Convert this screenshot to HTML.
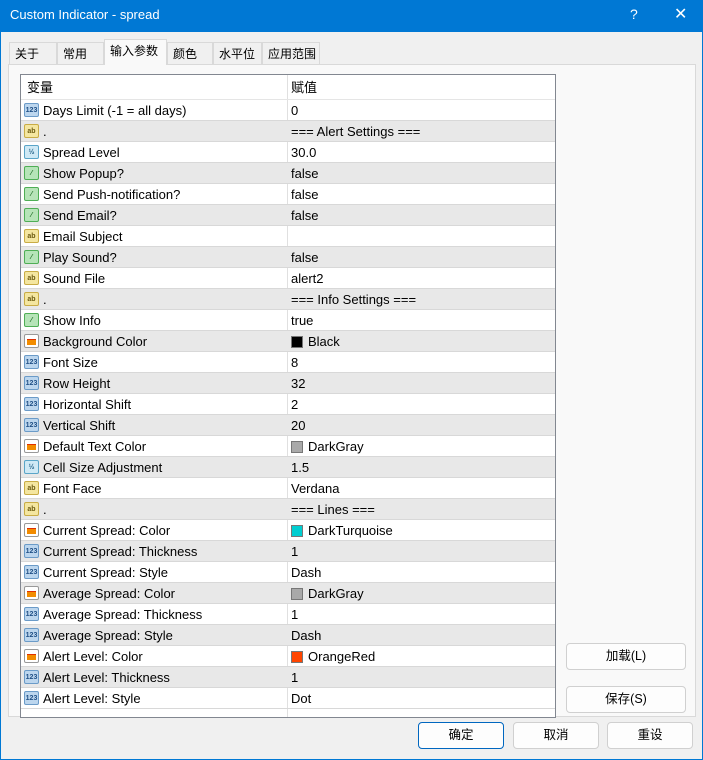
<!DOCTYPE html>
<html><head><meta charset="utf-8"><style>
*{box-sizing:border-box;margin:0;padding:0}
body{width:703px;height:760px;overflow:hidden;background:#0078d4;font-family:"Liberation Sans","Noto Sans CJK SC",sans-serif;font-size:13px;color:#000;position:relative}
.win{position:absolute;left:1px;top:32px;width:701px;height:727px;background:#f0f0f0}
.title{position:absolute;left:10px;top:7px;color:#fff;font-size:13px}
.tb{position:absolute;color:#fff;font-size:14px;top:6px}
.tab{position:absolute;top:42px;height:22px;line-height:22px;padding:0 5px;font-size:12px;border:1px solid #d9d9d9;border-bottom:none;background:#f0f0f0;white-space:nowrap;overflow:hidden}
.tab.act{top:39px;height:26px;background:#f9f9f9;z-index:2}
.panel{position:absolute;left:8px;top:64px;width:688px;height:653px;background:#f9f9f9;border:1px solid #d9d9d9}
.tbl{position:absolute;left:20px;top:74px;width:536px;height:644px;background:#fff;border:1px solid #828790;overflow:hidden}
.hdr{position:absolute;left:0;top:0;width:534px;height:25px;line-height:26px;border-bottom:1px solid #e5e5e5}
.row{position:absolute;left:0;width:534px;height:21px;line-height:22px;border-bottom:1px solid #d8d8d8;white-space:nowrap}
.row.g{background:#e8e8e8}
.n{position:absolute;left:22px}
.v{position:absolute;left:270px}
.div{position:absolute;left:266px;top:0;width:1px;height:100%;background:#e0e0e0}
.ic{position:absolute;left:3px;top:3px;width:15px;height:14px;border-radius:2px;font-size:7px;line-height:13px;text-align:center;font-weight:bold}
.i1{background:#bcd6ee;border:1px solid #6b9bc8;color:#1f4f86}
.i2{background:#f4e6a0;border:1px solid #c9ac45;color:#6b5a10}
.i3{background:#b6e4b8;border:1px solid #4fae55;color:#1d6a22}
.i4{background:#fff;border:1px solid #999}
.i4:after{content:"";position:absolute;left:2px;top:4px;width:9px;height:5px;background:#f28c00;border-top:1px solid #e03000}
.i5{background:#cfe9f5;border:1px solid #5aa5c8;color:#1f5f86}
.sw{display:inline-block;width:12px;height:12px;vertical-align:-2px;margin-right:5px;border:1px solid #777}
.btn{position:absolute;height:27px;background:#fdfdfd;border:1px solid #d0d0d0;border-radius:4px;text-align:center;line-height:25px;font-size:12.5px}
</style></head><body>
<div class="title">Custom Indicator - spread</div>
<div class="tb" style="left:630px">?</div><div class="tb" style="left:674px;font-size:16px;top:4px">✕</div>
<div class="win"></div>
<div class="tab" style="left:9px;width:48px">关于</div>
<div class="tab" style="left:57px;width:47px">常用</div>
<div class="tab act" style="left:104px;width:63px">输入参数</div>
<div class="tab" style="left:167px;width:46px">颜色</div>
<div class="tab" style="left:213px;width:49px">水平位</div>
<div class="tab" style="left:262px;width:58px">应用范围</div>
<div class="panel"></div>
<div class="tbl">
<div class="div"></div>
<div class="hdr"><span style="position:absolute;left:6px">变量</span><span style="position:absolute;left:270px">赋值</span></div>
<div class="row" style="top:25px"><span class="ic i1">123</span><span class="n">Days Limit (-1 = all days)</span><span class="v">0</span></div>
<div class="row g" style="top:46px"><span class="ic i2">ab</span><span class="n">.</span><span class="v">=== Alert Settings ===</span></div>
<div class="row" style="top:67px"><span class="ic i5">½</span><span class="n">Spread Level</span><span class="v">30.0</span></div>
<div class="row g" style="top:88px"><span class="ic i3">⁄</span><span class="n">Show Popup?</span><span class="v">false</span></div>
<div class="row" style="top:109px"><span class="ic i3">⁄</span><span class="n">Send Push-notification?</span><span class="v">false</span></div>
<div class="row g" style="top:130px"><span class="ic i3">⁄</span><span class="n">Send Email?</span><span class="v">false</span></div>
<div class="row" style="top:151px"><span class="ic i2">ab</span><span class="n">Email Subject</span><span class="v"></span></div>
<div class="row g" style="top:172px"><span class="ic i3">⁄</span><span class="n">Play Sound?</span><span class="v">false</span></div>
<div class="row" style="top:193px"><span class="ic i2">ab</span><span class="n">Sound File</span><span class="v">alert2</span></div>
<div class="row g" style="top:214px"><span class="ic i2">ab</span><span class="n">.</span><span class="v">=== Info Settings ===</span></div>
<div class="row" style="top:235px"><span class="ic i3">⁄</span><span class="n">Show Info</span><span class="v">true</span></div>
<div class="row g" style="top:256px"><span class="ic i4"></span><span class="n">Background Color</span><span class="v"><span class="sw" style="background:#000"></span>Black</span></div>
<div class="row" style="top:277px"><span class="ic i1">123</span><span class="n">Font Size</span><span class="v">8</span></div>
<div class="row g" style="top:298px"><span class="ic i1">123</span><span class="n">Row Height</span><span class="v">32</span></div>
<div class="row" style="top:319px"><span class="ic i1">123</span><span class="n">Horizontal Shift</span><span class="v">2</span></div>
<div class="row g" style="top:340px"><span class="ic i1">123</span><span class="n">Vertical Shift</span><span class="v">20</span></div>
<div class="row" style="top:361px"><span class="ic i4"></span><span class="n">Default Text Color</span><span class="v"><span class="sw" style="background:#a9a9a9"></span>DarkGray</span></div>
<div class="row g" style="top:382px"><span class="ic i5">½</span><span class="n">Cell Size Adjustment</span><span class="v">1.5</span></div>
<div class="row" style="top:403px"><span class="ic i2">ab</span><span class="n">Font Face</span><span class="v">Verdana</span></div>
<div class="row g" style="top:424px"><span class="ic i2">ab</span><span class="n">.</span><span class="v">=== Lines ===</span></div>
<div class="row" style="top:445px"><span class="ic i4"></span><span class="n">Current Spread: Color</span><span class="v"><span class="sw" style="background:#00ced1"></span>DarkTurquoise</span></div>
<div class="row g" style="top:466px"><span class="ic i1">123</span><span class="n">Current Spread: Thickness</span><span class="v">1</span></div>
<div class="row" style="top:487px"><span class="ic i1">123</span><span class="n">Current Spread: Style</span><span class="v">Dash</span></div>
<div class="row g" style="top:508px"><span class="ic i4"></span><span class="n">Average Spread: Color</span><span class="v"><span class="sw" style="background:#a9a9a9"></span>DarkGray</span></div>
<div class="row" style="top:529px"><span class="ic i1">123</span><span class="n">Average Spread: Thickness</span><span class="v">1</span></div>
<div class="row g" style="top:550px"><span class="ic i1">123</span><span class="n">Average Spread: Style</span><span class="v">Dash</span></div>
<div class="row" style="top:571px"><span class="ic i4"></span><span class="n">Alert Level: Color</span><span class="v"><span class="sw" style="background:#ff4500"></span>OrangeRed</span></div>
<div class="row g" style="top:592px"><span class="ic i1">123</span><span class="n">Alert Level: Thickness</span><span class="v">1</span></div>
<div class="row" style="top:613px"><span class="ic i1">123</span><span class="n">Alert Level: Style</span><span class="v">Dot</span></div>
</div>
<div class="btn" style="left:566px;top:643px;width:120px">加载(L)</div>
<div class="btn" style="left:566px;top:686px;width:120px">保存(S)</div>
<div class="btn" style="left:418px;top:722px;width:86px;border:1px solid #0067c0">确定</div>
<div class="btn" style="left:513px;top:722px;width:86px">取消</div>
<div class="btn" style="left:607px;top:722px;width:86px">重设</div>
</body></html>
